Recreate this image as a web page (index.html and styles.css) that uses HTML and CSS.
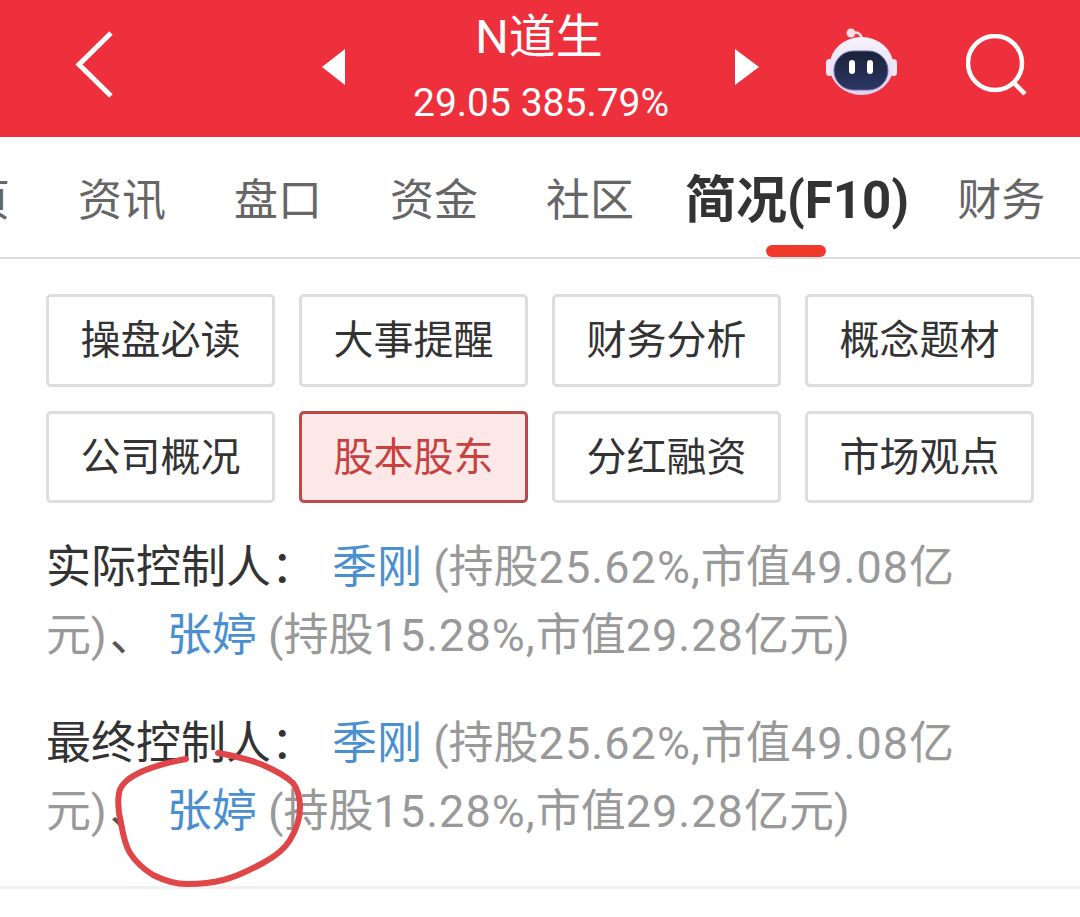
FILE: index.html
```html
<!DOCTYPE html>
<html lang="zh-CN">
<head>
<meta charset="utf-8">
<title>N道生</title>
<link rel="stylesheet" href="styles.css">
</head>
<body>
<div class="page">
  <header class="header">
    <svg class="back" width="42" height="70" viewBox="0 0 42 70"><path d="M37 3 L5 34.500 L37 66" fill="none" stroke="#fff" stroke-width="5"/></svg>
    <svg class="tri tri-left" width="24" height="36" viewBox="0 0 24 36"><path d="M0 18 L23 0 V36 Z" fill="#fff"/></svg>
    <div class="title">
      <div class="name">N道生</div>
      <div class="quote">29.05 385.79%</div>
    </div>
    <svg class="tri tri-right" width="24" height="36" viewBox="0 0 24 36"><path d="M0 0 L24 18 L0 36 Z" fill="#fff"/></svg>
    <svg class="robot" width="71" height="70" viewBox="0 0 71 70">
      <defs>
        <linearGradient id="shell" x1="0" y1="0" x2="0" y2="1"><stop offset="0" stop-color="#f6f2fb"/><stop offset="1" stop-color="#ddd3f0"/></linearGradient>
        <linearGradient id="visor" x1="0" y1="0" x2="0" y2="1"><stop offset="0" stop-color="#1a2238"/><stop offset="1" stop-color="#2c3763"/></linearGradient>
      </defs>
      <path d="M26 8 C30 5 35 7 36 13" fill="none" stroke="#f3dbe3" stroke-width="2.500"/>
      <circle cx="25" cy="7" r="4.500" fill="#f7dfe6"/>
      <rect x="0" y="33" width="7" height="17" rx="3.500" fill="#eee7f6"/>
      <rect x="64" y="33" width="7" height="17" rx="3.500" fill="#eee7f6"/>
      <ellipse cx="35.500" cy="40" rx="32" ry="29" fill="url(#shell)"/>
      <rect x="8" y="25" width="54" height="39" rx="19.500" fill="url(#visor)" stroke="#6b6bb0" stroke-width="1"/>
      <rect x="23" y="34" width="6" height="14" rx="3" fill="#fff"/>
      <rect x="41" y="34" width="6" height="14" rx="3" fill="#fff"/>
    </svg>
    <svg class="search" width="61" height="62" viewBox="0 0 61 62"><circle cx="29" cy="29" r="27" fill="none" stroke="#fff" stroke-width="4.500"/><path d="M48 49 L59 60" stroke="#fff" stroke-width="4.500" fill="none"/></svg>
  </header>

  <nav class="tabs">
    <span class="tab">首页</span>
    <span class="tab">资讯</span>
    <span class="tab">盘口</span>
    <span class="tab">资金</span>
    <span class="tab">社区</span>
    <span class="tab tab-active">简况(F10)</span>
    <span class="tab">财务</span>
  </nav>

  <section class="grid">
    <div class="btn">操盘必读</div>
    <div class="btn">大事提醒</div>
    <div class="btn">财务分析</div>
    <div class="btn">概念题材</div>
    <div class="btn">公司概况</div>
    <div class="btn btn-active">股本股东</div>
    <div class="btn">分红融资</div>
    <div class="btn">市场观点</div>
  </section>

  <section class="info">
    <p class="para"><span class="label">实际控制人：</span><a class="link first">季刚</a> (持股<span class="num">25.62%,</span>市值<span class="num">49.08</span>亿元)<span class="sep">、</span> <a class="link">张婷</a> (持股<span class="num">15.28%,</span>市值<span class="num">29.28</span>亿元)</p>
    <p class="para"><span class="label">最终控制人：</span><a class="link first">季刚</a> (持股<span class="num">25.62%,</span>市值<span class="num">49.08</span>亿元)<span class="sep">、</span> <a class="link">张婷</a> (持股<span class="num">15.28%,</span>市值<span class="num">29.28</span>亿元)</p>
  </section>
  <div class="rule"></div>

  <svg class="scribble" width="1080" height="917" viewBox="0 0 1080 917">
    <path d="M186 759 C170 762 155 766 143 771 C130 777 121 783 119 793 C117 805 119 815 121 823 C123 835 125 845 130 853 C137 864 145 870 153 875 C165 881 176 884 187 884 C200 884 212 883 223 880 C237 877 250 870 263 863 C274 857 284 850 290 840 C296 830 300 818 300 807 C300 797 298 790 293 783 C285 775 274 770 263 765 C254 761 246 759 237 757 C230 755 224 754 218 753" fill="none" stroke="#e04548" stroke-width="6" stroke-linecap="round"/>
  </svg>
</div>
</body>
</html>
```
FILE: styles.css
```css
* { box-sizing: border-box; }
html, body { margin: 0; padding: 0; background: #fff; }
body { font-family: Roboto, "Noto Sans CJK SC", sans-serif; }
.page { position: relative; width: 1080px; height: 917px; overflow: hidden; background: #fff; }

.header { display: flex; align-items: center; height: 137px; padding-left: 74px; background: #ee303c; color: #fff; }
.back { flex: none; margin-top: -8px; }
.tri { flex: none; margin-top: -4px; }
.tri-left { margin-left: 206px; }
.title { flex: none; width: 255px; margin: 11px 67px 0; text-align: center; white-space: nowrap; }
.name { font-size: 47px; line-height: 50px; margin-top: -12px; margin-right: 3px; }
.quote { font-size: 39px; line-height: 42px; margin-top: 20px; }
.robot { flex: none; margin-left: 67px; margin-top: -15px; }
.search { flex: none; margin-left: 69px; margin-top: -8px; }

.tabs { display: flex; align-items: center; height: 122px; padding-top: 8px; margin-left: -78px; gap: 68px; border-bottom: 2px solid #ddd; position: relative; width: 1200px; }
.tab { position: relative; flex: none; font-size: 44px; line-height: 60px; color: #666; white-space: nowrap; }
.tab-active { margin: 0 -20px 0 -17px; font-size: 51px; font-weight: 700; color: #333; }
.tab-active::after { content: ""; position: absolute; left: 81px; bottom: -26px; width: 60px; height: 12px; border-radius: 6px; background: #f0392b; }

.grid { display: grid; grid-template-columns: repeat(4, 229px); grid-auto-rows: 92.5px; gap: 24px; padding: 35px 0 0 46px; }
.btn { display: flex; align-items: center; justify-content: center; padding-bottom: 6px; border: 3px solid #ddd; border-radius: 5px; background: #fff; font-size: 40px; color: #333; }
.btn-active { border-color: #b84a4a; background: #fde8e8; color: #c8413f; }

.info { padding: 31px 90px 0 46px; }
.para { margin: 0 0 40px; font-size: 45px; line-height: 68px; color: #999; }
.label { color: #333; }
.link { color: #4a90d0; }
.first { margin-left: 16px; }
.num { letter-spacing: 1.05px; }
.sep { margin-left: 3px; margin-right: 1px; color: #555; }
.rule { height: 3px; margin-top: 1px; background: #f0f0f0; }

.scribble { position: absolute; left: 0; top: 0; pointer-events: none; }
```
